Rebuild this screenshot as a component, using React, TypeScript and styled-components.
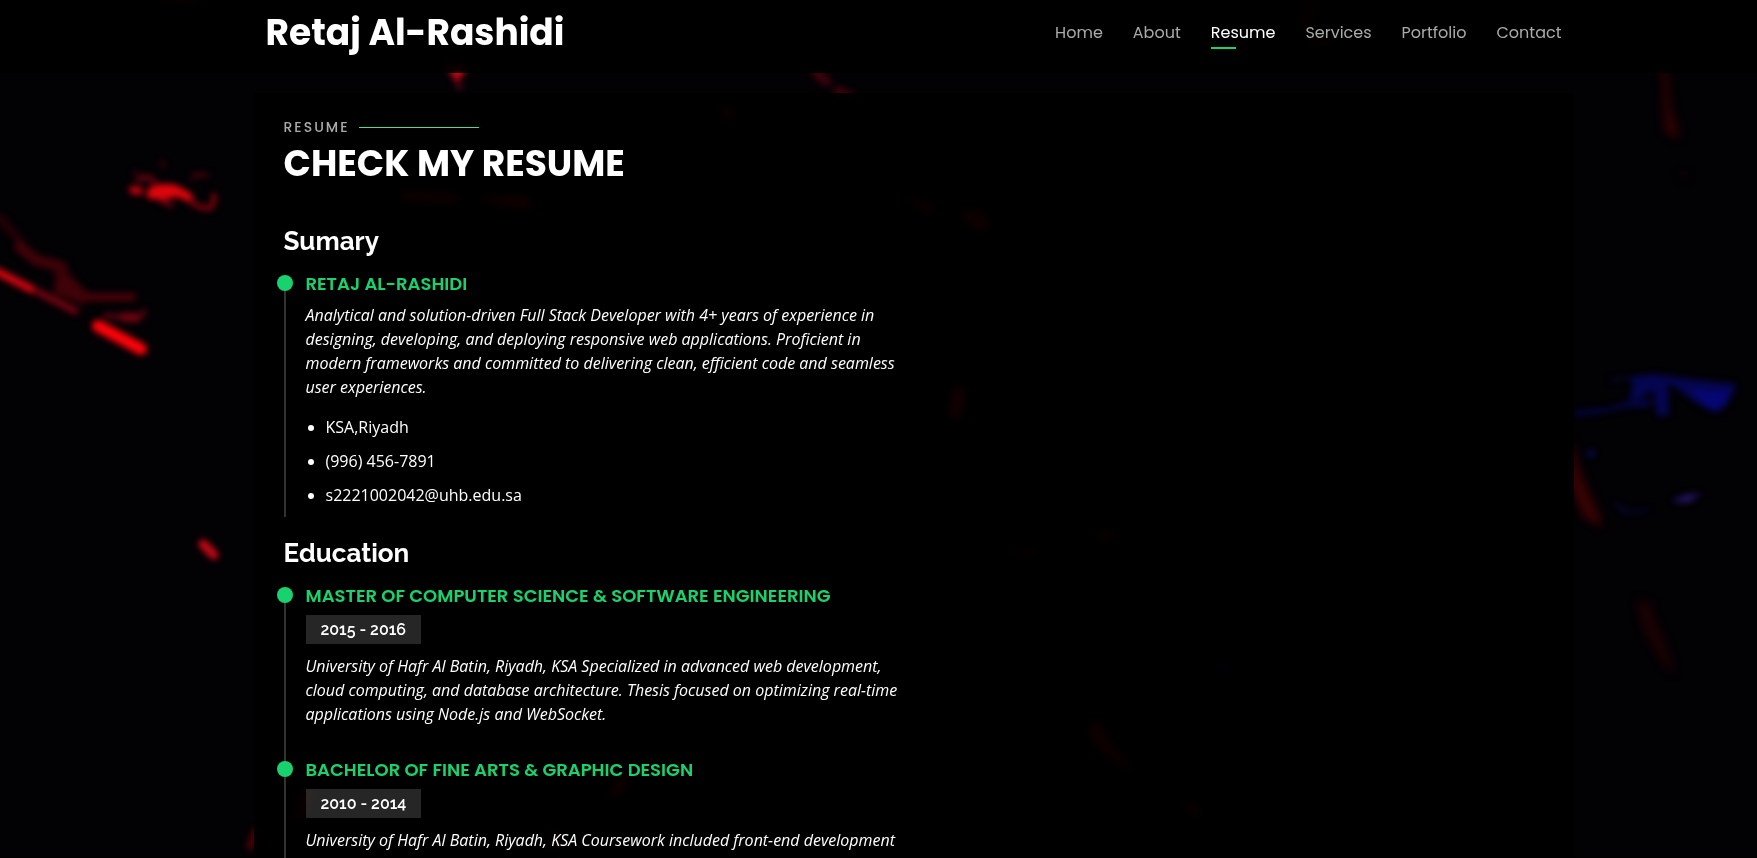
import React from "react";
import styled, { createGlobalStyle } from "styled-components";

const headingFont = `Poppins, Inter, "Open Sans", sans-serif`;
const titleFont = `Raleway, Lato, "Open Sans", sans-serif`;
const bodyFont = `"Open Sans", "Noto Sans", sans-serif`;
const green = "#18d26e";

const GlobalStyle = createGlobalStyle`
  *, *::before, *::after { box-sizing: border-box; }
  body {
    margin: 0;
    background: #000;
    color: #fff;
    font: 400 16px/24px ${bodyFont};
  }
`;

const Page = styled.div`
  height: 100vh;
  overflow-y: auto;
  scrollbar-width: none;
  position: relative;
`;

const Backdrop = styled.svg`
  position: fixed;
  inset: 0 0 1px;
  width: 100%;
  height: calc(100% - 1px);
  z-index: -1;
  background: #020104;
`;

const Header = styled.header`
  position: sticky;
  top: 0;
  z-index: 2;
  height: 73px;
  padding: 8px 0 0 70px;
  background: rgba(0, 0, 0, 0.9);
`;

const HeaderInner = styled.div`
  max-width: 1320px;
  margin: 0 auto;
  padding: 0 12px;
  display: flex;
  justify-content: space-between;
  align-items: flex-start;
`;

const Logo = styled.h1`
  margin: 0;
  font: 700 36px/50px ${headingFont};

  a {
    color: #fff;
    text-decoration: none;
  }
`;

const NavList = styled.ul`
  display: flex;
  gap: 30px;
  margin: 0;
  padding: 13px 0 0;
  list-style: none;
`;

const NavLink = styled.a<{ $active?: boolean }>`
  display: block;
  position: relative;
  font: 400 16px/24px ${headingFont};
  color: ${(p) => (p.$active ? "#fff" : "#aaa")};
  text-decoration: none;

  &::after {
    content: "";
    display: ${(p) => (p.$active ? "block" : "none")};
    position: absolute;
    left: 0;
    bottom: -4px;
    width: 25px;
    height: 2px;
    background: ${green};
  }
`;

const Main = styled.main`
  padding: 20px 0 0 70px;
`;

const Section = styled.section`
  max-width: 1320px;
  margin: 0 auto;
  padding: 24px 30px 30px;
  background: rgba(0, 0, 0, 0.9);
`;

const Eyebrow = styled.h2`
  display: flex;
  align-items: center;
  gap: 10px;
  margin: 0;
  font: 500 14px/21px ${headingFont};
  letter-spacing: 2px;
  text-transform: uppercase;
  color: #aaa;

  &::after {
    content: "";
    width: 120px;
    height: 1px;
    background: #4ade91;
  }
`;

const Heading = styled.p`
  margin: 3px 0 38px;
  font: 700 36px/46px ${headingFont};
  text-transform: uppercase;
`;

const Column = styled.div`
  width: 50%;
  padding-right: 12px;
`;

const GroupTitle = styled.h3`
  margin: 20px 0;
  font: 700 26px/32px ${titleFont};
`;

const Item = styled.article<{ $last?: boolean }>`
  position: relative;
  margin-top: -2px;
  padding: 0 0 ${(p) => (p.$last ? 0 : 21)}px 20px;
  border-left: 2px solid rgba(255, 255, 255, 0.2);

  &::before {
    content: "";
    position: absolute;
    left: -9px;
    top: 0;
    width: 16px;
    height: 16px;
    border-radius: 50%;
    background: ${green};
  }
`;

const ItemTitle = styled.h4`
  margin: 0 0 10px;
  font: 600 18px/18px ${headingFont};
  text-transform: uppercase;
  color: ${green};
`;

const Years = styled.h5`
  width: fit-content;
  margin: 0 0 10px;
  padding: 0 15px;
  font: 600 16px/29px ${titleFont};
  background: rgba(255, 255, 255, 0.15);
`;

const Text = styled.p`
  margin: 0 0 16px;
  font-style: italic;
`;

const Facts = styled.ul`
  margin: 0;
  padding: 0 0 0 20px;

  li {
    padding-bottom: 10px;
  }
`;

const links = ["Home", "About", "Resume", "Services", "Portfolio", "Contact"];

const schools = [
  {
    title: "Master of Computer Science & Software Engineering",
    years: "2015 - 2016",
    text: "University of Hafr Al Batin, Riyadh, KSA Specialized in advanced web development, cloud computing, and database architecture. Thesis focused on optimizing real-time applications using Node.js and WebSocket.",
  },
  {
    title: "Bachelor of Fine Arts & Graphic Design",
    years: "2010 - 2014",
    text: "University of Hafr Al Batin, Riyadh, KSA Coursework included front-end development (HTML5, CSS3, JavaScript), backend systems (Python, Java), and collaborative projects.",
  },
];

function Splashes() {
  return (
    <Backdrop viewBox="0 0 1757 857" preserveAspectRatio="xMidYMid slice" aria-hidden="true">
      <defs>
        <filter id="soft" x="-30%" y="-30%" width="160%" height="160%" colorInterpolationFilters="sRGB">
          <feGaussianBlur stdDeviation="3" />
        </filter>
        <filter id="haze" x="-30%" y="-30%" width="160%" height="160%" colorInterpolationFilters="sRGB">
          <feGaussianBlur stdDeviation="4" />
        </filter>
      </defs>

      <g filter="url(#soft)" fill="none" strokeLinecap="round">
        <path d="M148 188l10 -4l16 0l14 7l6 7l-6 4l-10 -5l-8 1l-6 3l-16 -3z" fill="#d8040c" />
        <path d="M150 195q18 -9 40 3" stroke="#e0060c" strokeWidth="7" />
        <path d="M133 190l6 1" stroke="#c0040c" strokeWidth="8" />
        <path d="M138 180q8 -6 16 1M162 201l9 4" stroke="#700410" strokeWidth="5" />
        <path d="M190 201q12 9 20 7q5 -4 4 -13" stroke="#80040c" strokeWidth="5" />
        <path d="M192 177q8 -3 15 -2M162 163l2 3M135 172l1 1" stroke="#4c040c" strokeWidth="4" />

        <path d="M0 218L14 234L24 248" stroke="#240108" strokeWidth="8" />
        <path d="M20 247L36 260L62 267" stroke="#400208" strokeWidth="11" />
        <path d="M56 268l10 6l14 14l8 8l-6 6l-26 -10l2 -16z" fill="#400208" stroke="#3a0207" strokeWidth="5" />
        <path d="M88 297L132 297" stroke="#480208" strokeWidth="8" />
        <path d="M-4 271L31 289" stroke="#d80610" strokeWidth="8" />
        <path d="M38 292L75 311" stroke="#780410" strokeWidth="7" />
        <path d="M106 316l32 2l6 -6" stroke="#50050e" strokeWidth="6" />
        <path d="M124 317l12 1" stroke="#700410" strokeWidth="9" />
        <path d="M98 326L141 349" stroke="#ff0309" strokeWidth="12" />

        <path d="M203 544L214 555" stroke="#c80a16" strokeWidth="9" />
        <path d="M256 832L251 846" stroke="#500208" strokeWidth="8" />

        <path d="M446 60L460 88" stroke="#400512" strokeWidth="6" />
        <path d="M446 66l22 0l-10 16z" fill="#d00618" />
        <path d="M816 72L826 81M838 91L850 97" stroke="#3c030c" strokeWidth="10" />
        <path d="M162 -2L196 2" stroke="#700410" strokeWidth="5" />
        <path d="M1312 -4L1306 24" stroke="#300408" strokeWidth="18" />
        <path d="M1312 43L1330 40" stroke="#500408" strokeWidth="6" />
      </g>

      <g filter="url(#haze)">
        <path d="M1661 66l6 0l4 38l8 26l-1 10l-14 -8z" fill="#280202" />
        <path d="M1679 172l8 2l-4 5z" fill="#240202" />
        <path d="M1570 436l12 40l20 44l-3 6l-15 -8l-14 -30z" fill="#360203" />
        <path d="M1636 600l14 2l4 14l14 34l6 24l-10 -8l-20 -34z" fill="#1a0103" />
      </g>

      <g filter="url(#soft)">
        <path d="M1574 411l38 -4l22 -8l16 -1l0 9l-24 1l-30 6l-22 2z" fill="#040440" />
        <path d="M1610 378l24 -2l0 4l-24 2z" fill="#040420" />
        <path d="M1630 377l24 -3l28 4l54 6l-2 7l-6 12l-6 7l-10 2l-20 -12l-20 -15l-4 0l1 30l-12 1l-4 -26l-14 8l-10 1l4 -14z" fill="#050550" />
        <path d="M1690 390l40 2l-8 14l-8 4l-12 -8z" fill="#060674" />
        <path d="M1585 453l9 -4l2 6l-8 3z" fill="#080848" />
        <path d="M1615 502l12 10l22 -2l-24 3z" fill="#07073a" stroke="#07073a" strokeWidth="2" />
        <path d="M1674 501l12 -5l11 -1l-8 6z" fill="#3c2478" stroke="#1e1058" strokeWidth="3" />
      </g>

      <g filter="url(#haze)">
        <path d="M400 192l60 4l-4 7l-52 -4zM475 198l50 -2l10 11l-34 -2z" fill="#c80404" />
        <path d="M904 195l28 10l-4 10zM961 210l20 2l10 12l-10 8l-14 -8z" fill="#a00404" />
        <path d="M954 386l12 2l-4 28l-14 2z" fill="#b80420" />
        <path d="M720 106l10 2l2 12l-8 -2z" fill="#b00404" />
        <path d="M1097 718l8 16l30 40l-32 -22l-16 -20z" fill="#980208" />
        <path d="M1179 802l20 4l0 12z" fill="#900208" />
        <path d="M606 798l14 -20l10 -4l-8 18z" fill="#c00404" />
        <path d="M308 786l-14 32l6 2l14 -28z" fill="#a00404" />
        <path d="M554 826l6 14l-8 16z" fill="#b00404" />
        <path d="M1092 533l30 -2l-18 8zM1008 553l34 -4l-18 7z" fill="#a00410" />
        <path d="M1208 664l26 -4l-4 16z" fill="#0a0a50" />
      </g>
    </Backdrop>
  );
}

export default function App() {
  return (
    <Page>
      <GlobalStyle />
      <Splashes />
      <Header>
        <HeaderInner>
          <Logo>
            <a href="#home">Retaj Al-Rashidi</a>
          </Logo>
          <nav aria-label="Main">
            <NavList>
              {links.map((name) => (
                <li key={name}>
                  <NavLink href={`#${name.toLowerCase()}`} $active={name === "Resume"}>
                    {name}
                  </NavLink>
                </li>
              ))}
            </NavList>
          </nav>
        </HeaderInner>
      </Header>
      <Main>
        <Section id="resume">
          <Eyebrow>Resume</Eyebrow>
          <Heading>Check My Resume</Heading>
          <Column>
            <GroupTitle>Sumary</GroupTitle>
            <Item $last>
              <ItemTitle>Retaj Al-Rashidi</ItemTitle>
              <Text>
                Analytical and solution-driven Full Stack Developer with 4+ years of experience in
                designing, developing, and deploying responsive web applications. Proficient in
                modern frameworks and committed to delivering clean, efficient code and seamless
                user experiences.
              </Text>
              <Facts>
                <li>KSA,Riyadh</li>
                <li>(996) 456-7891</li>
                <li>s2221002042@uhb.edu.sa</li>
              </Facts>
            </Item>
            <GroupTitle>Education</GroupTitle>
            {schools.map((s) => (
              <Item key={s.years}>
                <ItemTitle>{s.title}</ItemTitle>
                <Years>{s.years}</Years>
                <Text>{s.text}</Text>
              </Item>
            ))}
          </Column>
        </Section>
      </Main>
    </Page>
  );
}
